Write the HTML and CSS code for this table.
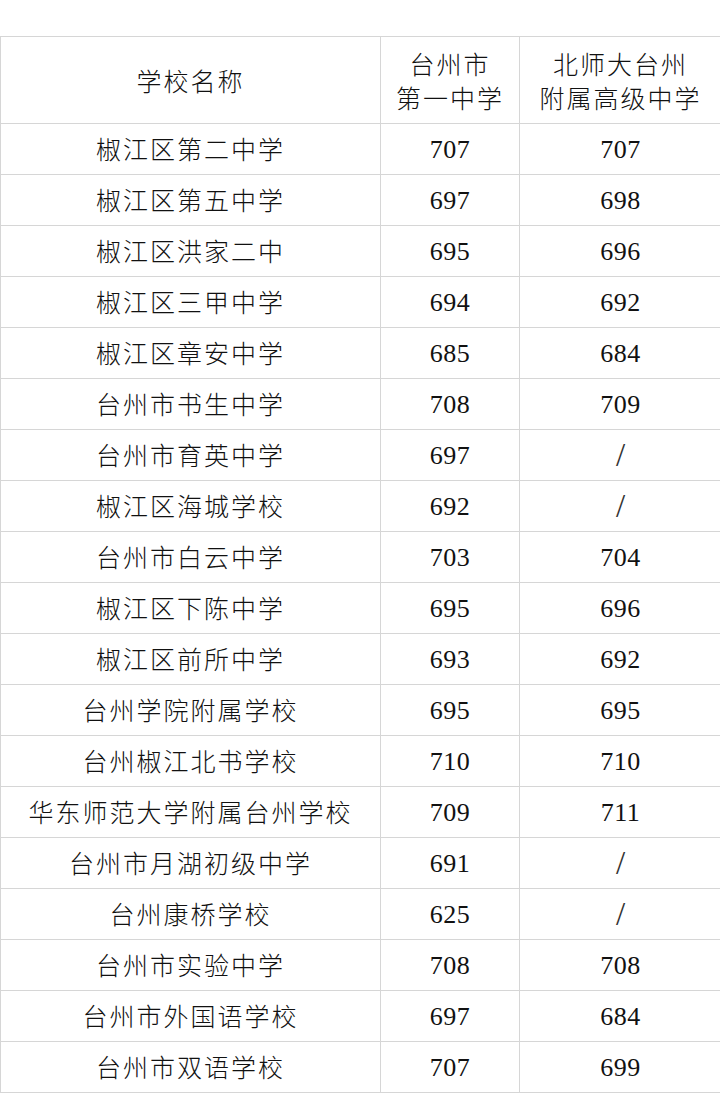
FILE: index.html
```html
<!DOCTYPE html>
<html lang="zh-CN">
<head>
<meta charset="utf-8">
<link rel="stylesheet" href="styles.css">
</head>
<body>
<table class="scores">
  <colgroup><col class="c1"><col class="c2"><col class="c3"></colgroup>
  <thead>
    <tr><th>学校名称</th><th>台州市<br>第一中学</th><th>北师大台州<br>附属高级中学</th></tr>
  </thead>
  <tbody>
    <tr><td>椒江区第二中学</td><td class="n">707</td><td class="n">707</td></tr>
    <tr><td>椒江区第五中学</td><td class="n">697</td><td class="n">698</td></tr>
    <tr><td>椒江区洪家二中</td><td class="n">695</td><td class="n">696</td></tr>
    <tr><td>椒江区三甲中学</td><td class="n">694</td><td class="n">692</td></tr>
    <tr><td>椒江区章安中学</td><td class="n">685</td><td class="n">684</td></tr>
    <tr><td>台州市书生中学</td><td class="n">708</td><td class="n">709</td></tr>
    <tr><td>台州市育英中学</td><td class="n">697</td><td class="s">/</td></tr>
    <tr><td>椒江区海城学校</td><td class="n">692</td><td class="s">/</td></tr>
    <tr><td>台州市白云中学</td><td class="n">703</td><td class="n">704</td></tr>
    <tr><td>椒江区下陈中学</td><td class="n">695</td><td class="n">696</td></tr>
    <tr><td>椒江区前所中学</td><td class="n">693</td><td class="n">692</td></tr>
    <tr><td>台州学院附属学校</td><td class="n">695</td><td class="n">695</td></tr>
    <tr><td>台州椒江北书学校</td><td class="n">710</td><td class="n">710</td></tr>
    <tr><td>华东师范大学附属台州学校</td><td class="n">709</td><td class="n">711</td></tr>
    <tr><td>台州市月湖初级中学</td><td class="n">691</td><td class="s">/</td></tr>
    <tr><td>台州康桥学校</td><td class="n">625</td><td class="s">/</td></tr>
    <tr><td>台州市实验中学</td><td class="n">708</td><td class="n">708</td></tr>
    <tr><td>台州市外国语学校</td><td class="n">697</td><td class="n">684</td></tr>
    <tr><td>台州市双语学校</td><td class="n">707</td><td class="n">699</td></tr>
  </tbody>
</table>
</body>
</html>
```
FILE: styles.css
```css
html, body {
  margin: 0;
  padding: 0;
  background: #fff;
}
body {
  padding-top: 36px;
  font-family: "Noto Sans CJK SC", sans-serif;
  color: #111;
}
.scores {
  border-collapse: collapse;
  table-layout: fixed;
  width: 721px;
}
.c1 { width: 380px; }
.c2 { width: 139px; }
.c3 { width: 202px; }
.scores th,
.scores td {
  border: 1px solid #d6d6d6;
  text-align: center;
  padding: 0;
  font-weight: 300;
  font-size: 25px;
  letter-spacing: 2px;
}
.scores th {
  height: 86px;
  line-height: 34px;
}
.scores td {
  height: 48px;
  line-height: 48px;
  padding-bottom: 2px;
}
.scores td.n {
  font-family: "Liberation Serif", serif;
  font-size: 26px;
  letter-spacing: 0.5px;
  font-weight: 400;
  padding-top: 2px;
  padding-bottom: 0;
}
.scores td.s {
  font-family: "Liberation Serif", serif;
  font-size: 33px;
  letter-spacing: 0;
  color: #333;
  padding-top: 1px;
  padding-bottom: 1px;
}
```
